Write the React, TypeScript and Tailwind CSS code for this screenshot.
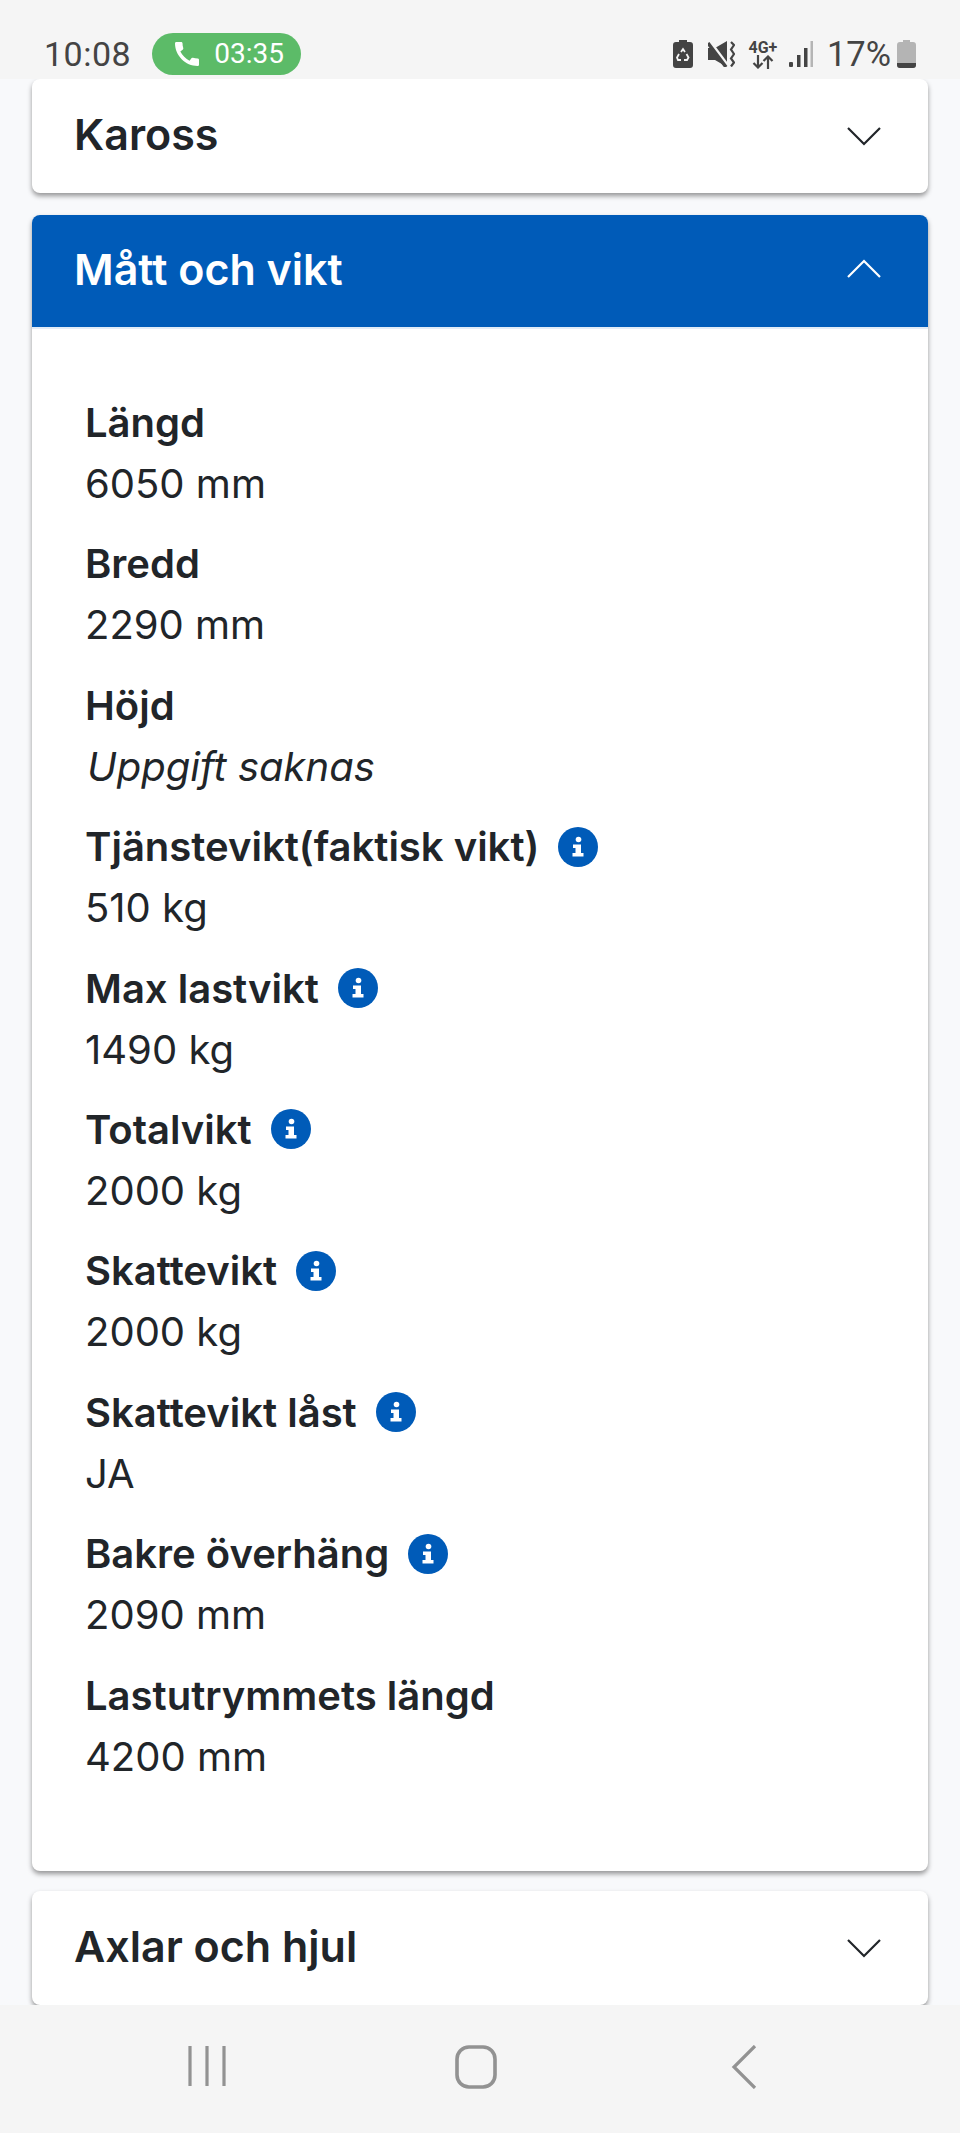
import React from 'react';
import { MdCall } from 'react-icons/md';

interface SpecRow {
    label: string;
    value: string;
    info?: boolean;
    missing?: boolean;
}

const specRows: SpecRow[] = [
    { label: 'Längd', value: '6050 mm' },
    { label: 'Bredd', value: '2290 mm' },
    { label: 'Höjd', value: 'Uppgift saknas', missing: true },
    { label: 'Tjänstevikt(faktisk vikt)', value: '510 kg', info: true },
    { label: 'Max lastvikt', value: '1490 kg', info: true },
    { label: 'Totalvikt', value: '2000 kg', info: true },
    { label: 'Skattevikt', value: '2000 kg', info: true },
    { label: 'Skattevikt låst', value: 'JA', info: true },
    { label: 'Bakre överhäng', value: '2090 mm', info: true },
    { label: 'Lastutrymmets längd', value: '4200 mm' },
];

const Chevron = ({ up = false }: { up?: boolean }) => (
    <svg className={up ? 'mb-[5px]' : ''} width="36" height="20" viewBox="0 0 36 20" fill="none" stroke="currentColor" strokeWidth="2.2">
        <path d={up ? 'M2 18 L18 2 L34 18' : 'M2 2 L18 18 L34 2'} />
    </svg>
);

const InfoIcon = () => (
    <svg className="ml-[19px] shrink-0" width="40" height="40" viewBox="0 0 40 40">
        <circle cx="20" cy="20" r="20" fill="#005bb8" />
        <circle cx="20.5" cy="12.5" r="2.8" fill="#ffffff" />
        <path d="M15 17.5h8v8.5h2.5v3.5h-11V26h3v-5H15z" fill="#ffffff" />
    </svg>
);

const StatusBar = () => (
    <div className="h-[79px] shrink-0 bg-[#f5f5f5] flex items-start justify-between pl-[44px] pr-[44px] pt-[33px] font-['Roboto',sans-serif]">
        <div className="flex items-center">
            <span className="text-[34px] leading-[42px] text-[#444444] tracking-[0.5px]">10:08</span>
            <div className="ml-[21px] h-[42px] w-[149px] rounded-full bg-[#5cbb68] flex items-center pl-[19px] text-white">
                <MdCall className="text-[32px]" />
                <span className="ml-[11px] text-[28px] leading-none">03:35</span>
            </div>
        </div>
        <div className="flex items-center h-[42px] text-[#444444]">
            {/* battery saver */}
            <svg width="20" height="28" viewBox="0 0 20 28">
                <path d="M6 0h8v2h3a3 3 0 0 1 3 3v20a3 3 0 0 1-3 3H3a3 3 0 0 1-3-3V5a3 3 0 0 1 3-3h3z" fill="#444444" />
                <path d="M8 12l2-3 2 3M13.5 14l2 3.5-1.5 2.5h-3M8 20H5l-1-2.5L6 14" stroke="#f5f5f5" strokeWidth="1.8" fill="none" />
            </svg>
            {/* mute + vibrate */}
            <svg className="ml-[15px]" width="27" height="26" viewBox="0 0 27 26" fill="none">
                <path d="M0 7h7L19 0v26L7 19H0z" fill="#444444" />
                <path d="M2 1l18 24" stroke="#f5f5f5" strokeWidth="3.5" />
                <path d="M0 2l18 24" stroke="#444444" strokeWidth="3.5" />
                <path d="M23 1l3 3-3 4.500 3 4.500-3 4.500 3 4-3 4" stroke="#444444" strokeWidth="2.2" />
            </svg>
            {/* 4G+ */}
            <div className="ml-[13px] w-[30px] flex flex-col items-center text-[#444444]">
                <span className="text-[16px] leading-[15px] font-bold whitespace-nowrap">4G+</span>
                <svg width="24" height="14" viewBox="0 0 24 14" fill="none" stroke="#444444" strokeWidth="2.2">
                    <path d="M7 0v12M2.500 8l4.500 4.500L11.500 8M17 14V2M12.500 6L17 1.500 21.500 6" />
                </svg>
            </div>
            {/* signal */}
            <svg className="ml-[11px]" width="24" height="27" viewBox="0 0 24 27">
                <rect x="0" y="21" width="4" height="5" rx="1" fill="#444444" />
                <rect x="8" y="14" width="3.5" height="12" fill="#444444" />
                <rect x="15" y="7" width="3.5" height="19" fill="#444444" />
                <rect x="21.500" y="0" width="2.500" height="26" fill="#b5b5b5" />
            </svg>
            <span className="ml-[14px] text-[34.5px] leading-[42px] text-[#444444]">17%</span>
            <svg className="ml-[6px]" width="19" height="28" viewBox="0 0 19 28">
                <path d="M6 0h7v2h3a3 3 0 0 1 3 3v20a3 3 0 0 1-3 3H3a3 3 0 0 1-3-3V5a3 3 0 0 1 3-3h3z" fill="#b4b4b4" />
                <path d="M0 23h19v2a3 3 0 0 1-3 3H3a3 3 0 0 1-3-3z" fill="#444444" />
            </svg>
        </div>
    </div>
);

const NavBar = () => (
    <div className="h-[128px] shrink-0 bg-[#f5f5f5] flex items-start pt-[40px] text-[#929292]">
        <svg className="ml-[187px]" width="40" height="42" viewBox="0 0 40 42" fill="none" stroke="currentColor" strokeWidth="3.2">
            <path d="M3 1v40M20 1v40M37 1v40" />
        </svg>
        <svg className="ml-[228px]" width="42" height="44" viewBox="0 0 42 44" fill="none" stroke="currentColor" strokeWidth="3.6">
            <rect x="2" y="2" width="38" height="40" rx="12" />
        </svg>
        <svg className="ml-[234px]" width="26" height="44" viewBox="0 0 26 44" fill="none" stroke="currentColor" strokeWidth="3.2">
            <path d="M24 1 L3 22 L24 43" />
        </svg>
    </div>
);

const ClosedCard = ({ title, className = '' }: { title: string; className?: string }) => (
    <div className={`mx-[32px] bg-white rounded-[8px] shadow-[0_3px_5px_rgba(0,0,0,0.4)] h-[114px] shrink-0 flex items-center justify-between pl-[42px] pr-[46px] text-[#212529] ${className}`}>
        <h2 className="text-[43px] font-semibold pb-[4px]">{title}</h2>
        <Chevron />
    </div>
);

const App: React.FC = () => {
    return (
        <div className="h-[2133px] w-[960px] overflow-hidden flex flex-col bg-[#f8f9fb] font-['Inter',sans-serif]">
            <StatusBar />

            <div className="flex-1 min-h-0 overflow-hidden flex flex-col">
                <ClosedCard title="Kaross" />

                {/* Open section */}
                <div className="mt-[22px] mx-[32px] bg-white rounded-[8px] shadow-[0_3px_5px_rgba(0,0,0,0.4)] shrink-0">
                    <div className="h-[114px] bg-[#005bb8] rounded-t-[8px] flex items-center justify-between pl-[42px] pr-[46px] text-white border-b-[2px] border-[#e2ecf7]">
                        <h2 className="text-[43px] font-semibold pb-[3px]">Mått och vikt</h2>
                        <Chevron up />
                    </div>
                    <div className="pt-[63px] pb-[65px] pl-[53px]">
                        {specRows.map((row) => (
                            <div key={row.label} className="h-[141.4px] text-[#212529]">
                                <div className="h-[61px] flex items-center">
                                    <span className="text-[40px] font-semibold leading-[61px]">{row.label}</span>
                                    {row.info && <InfoIcon />}
                                </div>
                                <div className={row.missing ? 'text-[40px] leading-[61px] italic pl-[2px]' : 'text-[40px] leading-[61px]'}>
                                    {row.value}
                                </div>
                            </div>
                        ))}
                    </div>
                </div>

                <ClosedCard title="Axlar och hjul" className="mt-[20px]" />
            </div>

            <NavBar />
        </div>
    );
};

export default App;
